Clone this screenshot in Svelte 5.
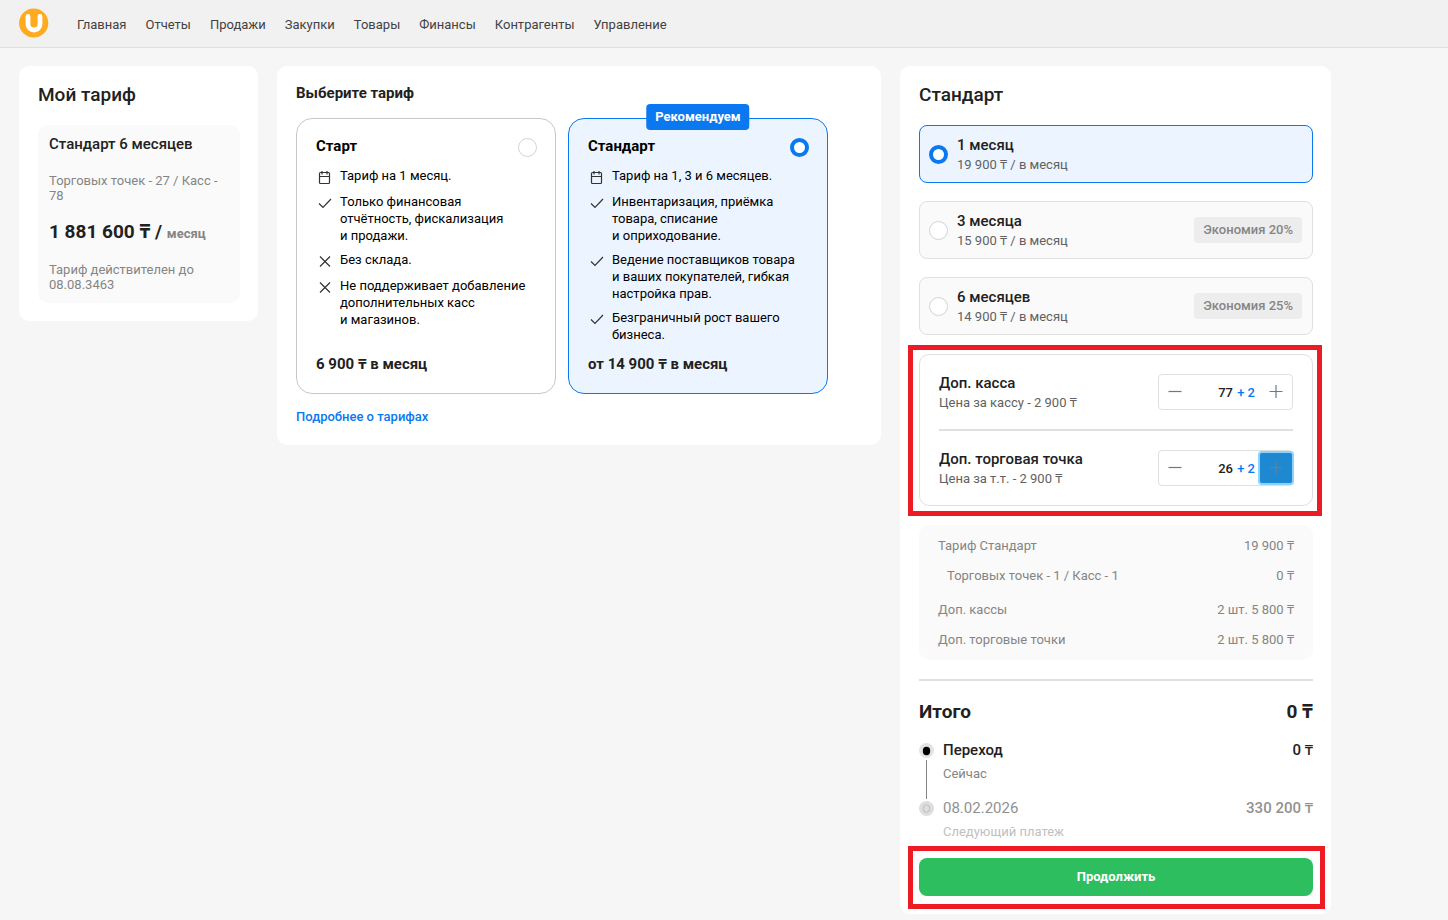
<script>
  const menu = ["Главная", "Отчеты", "Продажи", "Закупки", "Товары", "Финансы", "Контрагенты", "Управление"];

  const plans = [
    {
      id: "start",
      name: "Старт",
      price: "6 900 ₸ в месяц",
      items: [
        { icon: "calendar", text: "Тариф на 1 месяц." },
        { icon: "check", text: "Только финансовая отчётность, фискализация и\u00a0продажи." },
        { icon: "cross", text: "Без склада." },
        { icon: "cross", text: "Не поддерживает добавление дополнительных касс и\u00a0магазинов." }
      ]
    },
    {
      id: "standard",
      name: "Стандарт",
      price: "от 14 900 ₸ в месяц",
      recommended: true,
      items: [
        { icon: "calendar", text: "Тариф на 1, 3 и 6 месяцев." },
        { icon: "check", text: "Инвентаризация, приёмка товара, списание и\u00a0оприходование." },
        { icon: "check", text: "Ведение поставщиков товара и\u00a0ваших покупателей, гибкая настройка прав." },
        { icon: "check", text: "Безграничный рост вашего бизнеса." }
      ]
    }
  ];

  const periods = [
    { id: "1", name: "1 месяц", price: "19 900 ₸ / в месяц" },
    { id: "3", name: "3 месяца", price: "15 900 ₸ / в месяц", save: "Экономия 20%" },
    { id: "6", name: "6 месяцев", price: "14 900 ₸ / в месяц", save: "Экономия 25%" }
  ];

  let plan = $state("standard");
  let period = $state("1");

  let extras = $state([
    { name: "Доп. касса", hint: "Цена за кассу - 2 900 ₸", base: 77, added: 2 },
    { name: "Доп. торговая точка", hint: "Цена за т.т. - 2 900 ₸", base: 26, added: 2 }
  ]);
  // последняя нажатая кнопка «+»
  let pressed = $state(1);

  const money = (n) => String(n).replace(/\B(?=(\d{3})+$)/g, " ") + " ₸";
  const extraSum = (e) => `${e.added} шт. ${money(e.added * 2900)}`;

  function add(i) {
    extras[i].added += 1;
    pressed = i;
  }

  function remove(i) {
    if (extras[i].added > 0) extras[i].added -= 1;
    pressed = -1;
  }
</script>

<header class="topbar">
  <a class="logo" href="#/" aria-label="На главную">
    <svg width="30" height="30" viewBox="0 0 30 30">
      <circle cx="14.7" cy="15" r="14.6" fill="#ffab1f" />
      <path d="M9 8.3v7.7a6 6 0 0 0 12 0V8.3" fill="none" stroke="#fff" stroke-width="4.8" stroke-linecap="round" />
    </svg>
  </a>
  <nav>
    {#each menu as m}
      <a href="#/">{m}</a>
    {/each}
  </nav>
</header>

<main>
  <section class="card">
    <h2>Мой тариф</h2>
    <div class="current">
      <h3>Стандарт 6 месяцев</h3>
      <p>Торговых точек - 27 / Касс - 78</p>
      <div class="current-price">1 881 600 ₸ / <small>месяц</small></div>
      <p>Тариф действителен до 08.08.3463</p>
    </div>
  </section>

  <section class="card choose">
    <h2 class="small">Выберите тариф</h2>
    <div class="plans">
      {#each plans as p}
        <label class="plan" class:active={plan === p.id}>
          {#if p.recommended}<span class="badge">Рекомендуем</span>{/if}
          <span class="plan-head">
            <b>{p.name}</b>
            <input type="radio" name="plan" value={p.id} bind:group={plan} />
          </span>
          <span class="features">
            {#each p.items as item}
              <span class="feature">
                <svg width="18" height="18" viewBox="0 0 18 18" aria-hidden="true">
                  {#if item.icon === "calendar"}
                    <path d="M4.5 3.5h8a1 1 0 0 1 1 1v9a1 1 0 0 1-1 1h-8a1 1 0 0 1-1-1v-9a1 1 0 0 1 1-1zM3.5 7.5h10M6 2v3.5M11 2v3.5" />
                  {:else if item.icon === "check"}
                    <path d="M3 8.5l4 4L15 4" />
                  {:else}
                    <path d="M4 3.5l10 10M14 3.5l-10 10" />
                  {/if}
                </svg>
                <span>{item.text}</span>
              </span>
            {/each}
          </span>
          <b class="plan-price">{p.price}</b>
        </label>
      {/each}
    </div>
    <a class="more" href="#/tariffs">Подробнее о тарифах</a>
  </section>

  <section class="card order">
    <h2>Стандарт</h2>

    <div class="periods">
      {#each periods as p}
        <label class="period" class:active={period === p.id}>
          <input type="radio" name="period" value={p.id} bind:group={period} />
          <span class="label">
            <b>{p.name}</b>
            <span>{p.price}</span>
          </span>
          {#if p.save}<span class="save">{p.save}</span>{/if}
        </label>
      {/each}
    </div>

    <div class="extras">
      <span class="frame"></span>
      {#each extras as e, i}
        {#if i > 0}<hr />{/if}
        <div class="extra">
          <div class="label">
            <b>{e.name}</b>
            <span>{e.hint}</span>
          </div>
          <div class="stepper">
            <button aria-label="Убавить" onclick={() => remove(i)}>
              <svg width="14" height="14" viewBox="0 0 14 14"><path d="M0.5 6.5h13" /></svg>
            </button>
            <output>{e.base} <i>+ {e.added}</i></output>
            <button aria-label="Добавить" class:pressed={pressed === i} onclick={() => add(i)}>
              <svg width="14" height="14" viewBox="0 0 14 14"><path d="M0.5 6.5h13M7 0v13" /></svg>
            </button>
          </div>
        </div>
      {/each}
    </div>

    <dl class="summary">
      <div><dt>Тариф Стандарт</dt><dd>19 900 ₸</dd></div>
      <div class="sub"><dt>Торговых точек - 1 / Касс - 1</dt><dd>0 ₸</dd></div>
      <div><dt>Доп. кассы</dt><dd>{extraSum(extras[0])}</dd></div>
      <div><dt>Доп. торговые точки</dt><dd>{extraSum(extras[1])}</dd></div>
    </dl>

    <hr />

    <div class="total"><span>Итого</span><span>0 ₸</span></div>

    <ol class="steps">
      <li>
        <span class="mark"><svg width="15" height="15" viewBox="0 0 15 15"><circle cx="7.5" cy="7.5" r="7.5" fill="#e3e3e3" /><ellipse cx="7.5" cy="8" rx="3.7" ry="4.2" fill="#000" /></svg></span>
        <span class="step-name"><b>Переход</b><span>Сейчас</span></span>
        <b>0 ₸</b>
      </li>
      <li class="next">
        <span class="mark"><svg width="15" height="15" viewBox="0 0 15 15"><circle cx="7.5" cy="7.5" r="7.5" fill="#dedede" /><ellipse cx="7.5" cy="7.5" rx="3.2" ry="3.8" fill="none" stroke="#bdbdbd" /></svg></span>
        <span class="step-name"><span>08.02.2026</span><span>Следующий платеж</span></span>
        <b>330 200 ₸</b>
      </li>
    </ol>

    <div class="submit">
      <span class="frame"></span>
      <button>Продолжить</button>
    </div>
  </section>
</main>

<style>
  :global(body) { margin: 0; background: #f6f6f6; color: #212121; font: 13px/17px Roboto, "Noto Sans", sans-serif; }
  h2, h3, p, dl, dd, ol { margin: 0; padding: 0; }
  b { font-weight: 500; }
  a { text-decoration: none; }
  button { font: inherit; cursor: pointer; }
  hr { width: 100%; height: 2px; margin: 19px 0; border: 0; background: #e0e0e0; }

  .topbar { display: flex; align-items: center; gap: 28px; height: 47px; padding: 0 19px; background: #f1f1f1; border-bottom: 1px solid #dedede; }
  .logo { display: flex; padding-bottom: 2px; }
  nav { display: flex; gap: 19px; padding-top: 2px; }
  nav a { color: #424242; }

  main { display: grid; grid-template-columns: 239fr 604fr 431fr 79fr; gap: 19px; align-items: start; padding: 18px 19px 6px; }
  .card { background: #fff; border-radius: 10px; padding: 19px 18px 18px 19px; }
  h2 { font-size: 19px; line-height: 20px; font-weight: 500; margin-bottom: 20px; }
  h2.small { font-size: 15px; line-height: 16px; font-weight: 700; margin-bottom: 17px; }

  .current { background: #fafafa; border-radius: 10px; padding: 11px; color: #858585; line-height: 15px; }
  h3 { font-size: 15px; line-height: 17px; font-weight: 500; color: #212121; margin-bottom: 20px; }
  .current-price { font-size: 19px; line-height: 24px; font-weight: 700; color: #212121; margin: 17px 0 16px; }
  .current-price small { font-size: 13px; color: #858585; }

  input[type="radio"] { appearance: none; flex: none; box-sizing: border-box; width: 19px; height: 19px; margin: 0; border: 1px solid #cfd4da; border-radius: 50%; background: #fff; }
  input[type="radio"]:checked { border: 4px solid #0a78f0; }

  .choose { padding-bottom: 20px; }
  .plans { display: grid; grid-template-columns: 1fr 1fr; gap: 12px; padding-right: 35px; }
  .plan { position: relative; display: flex; flex-direction: column; padding: 19px 18px 20px 19px; border: 1px solid #c8c8c8; border-radius: 16px; color: #000; }
  .plan.active { border-color: #0a78f0; background: #ecf5ff; }
  .plan-head { display: flex; justify-content: space-between; margin-bottom: 10px; }
  .plan-head b { font-size: 15px; font-weight: 700; }
  .features { display: flex; flex-direction: column; gap: 7px; margin-bottom: 12px; padding-right: 8px; }
  .feature { display: flex; gap: 6px; min-height: 19px; }
  .feature svg { flex: none; margin: 2px 0 -2px; fill: none; stroke: #333; stroke-width: 1.2; }
  .plan-price { margin-top: auto; font-size: 15px; line-height: 18px; font-weight: 700; color: #212121; }
  .badge { position: absolute; top: -15px; left: 50%; transform: translateX(-50%); padding: 0 9px; border-radius: 4px; background: #0a78f0; color: #fff; font-weight: 700; line-height: 26px; }
  .more { display: inline-block; margin-top: 14px; color: #0a78f0; font-weight: 500; }

  .periods { display: grid; gap: 18px; }
  .period { display: flex; align-items: center; gap: 9px; box-sizing: border-box; height: 58px; padding: 0 10px 0 9px; border: 1px solid #e0e0e0; border-radius: 8px; background: #fafafa; }
  .period.active { border-color: #0a78f0; background: #ecf5ff; }
  .label { display: grid; gap: 2px; flex: 1; padding-top: 2px; color: #616161; line-height: 18px; }
  .label b { font-size: 15px; color: #212121; }
  .save { padding: 0 9px; border-radius: 4px; background: #ededed; color: #858585; font-weight: 500; line-height: 26px; }

  .extras { position: relative; margin: 19px 0; padding: 19px; border: 1px solid #e0e0e0; border-radius: 10px; }
  .extra { display: flex; align-items: center; height: 36px; }
  .stepper { display: flex; align-items: center; box-sizing: border-box; width: 135px; height: 36px; border: 1px solid #e0e0e0; border-radius: 4px; }
  .stepper button { display: grid; place-items: center; width: 32px; height: 30px; padding: 0; border: 0; border-radius: 2px; background: none; }
  .stepper button.pressed { background: #1e88d0; box-shadow: 0 0 0 2px #8ad2ff; }
  .stepper svg { fill: none; stroke: #607d8b; stroke-width: 1.2; }
  .stepper .pressed svg { stroke: #747c84; }
  output { flex: 1; padding-right: 5px; text-align: right; font-weight: 500; }
  output i { margin-left: 1px; font-style: normal; color: #0a78f0; }

  .frame { position: absolute; inset: -10px -10px -11px -12px; border: 5px solid #ed1c24; pointer-events: none; }

  .summary { padding: 6px 19px 5px; border-radius: 10px; background: #fafafa; color: #858585; line-height: 30px; }
  .summary div { display: flex; justify-content: space-between; }
  .summary .sub { padding-left: 9px; margin-bottom: 4px; }

  .total { display: flex; justify-content: space-between; font-size: 19px; line-height: 24px; font-weight: 700; }
  .steps { list-style: none; margin: 17px 0 16px; }
  .steps li { display: flex; height: 58px; font-size: 15px; line-height: 18px; }
  .steps .mark { display: flex; flex-direction: column; align-items: center; gap: 2px; width: 15px; margin-right: 9px; padding-top: 2px; }
  .steps .mark svg { flex: none; }
  .steps .mark::after { content: ""; width: 1px; flex: 1; background: #858585; }
  .step-name { display: grid; align-content: start; gap: 6px; flex: 1; }
  .step-name span:last-child { font-size: 13px; color: #858585; }
  .steps .next { height: 43px; color: #919191; }
  .next .mark::after { display: none; }
  .next .step-name span:last-child { color: #c0c0c0; }

  .submit { position: relative; }
  .submit button { display: block; width: 100%; height: 38px; padding: 0 0 2px; border: 0; border-radius: 8px; background: #2dbe60; color: #fff; font-weight: 700; }
  .submit .frame { inset: -12px -12px -13px -11px; }
</style>
